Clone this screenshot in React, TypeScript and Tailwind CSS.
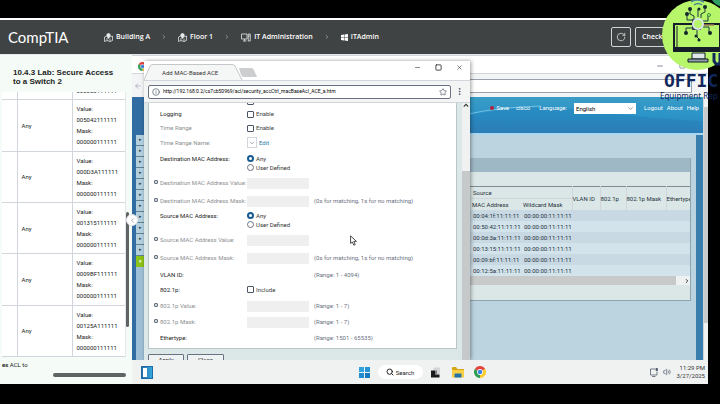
import type { ReactNode } from "react";
import { ArrowLeft, ChevronDown, ChevronLeft, ChevronRight, Info, Minus, MoreVertical, RotateCw, Search, Square, Star, Volume2, X } from "lucide-react";

const aclRows = ["005042111111", "000D3A111111", "001315111111", "0009BF111111", "00125A111111"];
const macRows = ["00:04:1f:11:11:11", "00:50:42:11:11:11", "00:0d:3a:11:11:11", "00:13:15:11:11:11", "00:09:bf:11:11:11", "00:12:5a:11:11:11"];

function ChromeLogo({ className }: { className?: string }) {
  return (
    <svg viewBox="0 0 24 24" className={className} aria-hidden="true">
      <path d="M12 12 L1.6 6 A12 12 0 0 1 22.4 6 Z" fill="#e0443a" />
      <path d="M12 12 L22.4 6 A12 12 0 0 1 12 24 Z" fill="#f9cb2e" />
      <path d="M12 12 L12 24 A12 12 0 0 1 1.6 6 Z" fill="#2f9e52" />
      <circle cx="12" cy="12" r="5.8" fill="#fff" />
      <circle cx="12" cy="12" r="4.5" fill="#3f83e8" />
    </svg>
  );
}

function MapPinIcon() {
  return (
    <svg viewBox="0 0 18 18" className="h-[9px] w-[9px]" fill="none" stroke="#e8eaea" strokeWidth="1.5" aria-hidden="true">
      <path d="M5.500 6 L1 8 V17 L6 15 L12 17 L17 15 V6 L12.500 7.500 M6 10 V15 M12 11 V17" />
      <path d="M9 11 C6 7.500 5.500 6 5.500 4.500 A3.500 3.500 0 0 1 12.500 4.500 C12.500 6 12 7.500 9 11 Z" fill="#e8eaea" />
    </svg>
  );
}

function ComputerIcon() {
  return (
    <svg viewBox="0 0 20 18" className="h-[9px] w-[10px]" fill="none" stroke="#e8eaea" strokeWidth="1.6" aria-hidden="true">
      <path d="M1 2 H12 V12 H1 Z M4 16 H11 M7 12 V16" />
      <path d="M14.500 2 H18.500 V16 H14.500 Z M14.500 6 H18.500" />
    </svg>
  );
}

function WindowsIcon({ className }: { className?: string }) {
  return (
    <svg viewBox="0 0 14 14" className={className} fill="currentColor" aria-hidden="true">
      <path d="M0 2 L6 1 V6.500 H0 Z M7 .9 L14 0 V6.500 H7 Z M0 7.500 H6 V13 L0 12 Z M7 7.500 H14 V14 L7 13.100 Z" />
    </svg>
  );
}

function Crumb({ icon, children }: { icon: ReactNode; children: ReactNode }) {
  return (
    <a href="#" className="flex items-center gap-[3px] text-[7px] font-semibold text-white">
      {icon}
      {children}
    </a>
  );
}

function TopBar() {
  return (
    <header className="flex h-9 shrink-0 items-center border-t-2 border-white bg-[#3f4344] pl-2 font-['Open_Sans',sans-serif]">
      <span className="w-24 font-['Lato',sans-serif] text-[15px] leading-4 text-white">CompTIA</span>
      <nav className="flex items-center gap-[11px]">
        <Crumb icon={<MapPinIcon />}>Building A</Crumb>
        <ChevronRight className="h-[6px] w-[6px] text-gray-300" />
        <Crumb icon={<MapPinIcon />}>Floor 1</Crumb>
        <ChevronRight className="h-[6px] w-[6px] text-gray-300" />
        <Crumb icon={<ComputerIcon />}>IT Administration</Crumb>
        <ChevronRight className="h-[6px] w-[6px] text-gray-300" />
        <Crumb icon={<WindowsIcon className="h-[7px] w-[7px]" />}>ITAdmin</Crumb>
      </nav>
      <div className="ml-auto flex gap-1">
        <button aria-label="Reload" className="flex h-5 w-5 items-center justify-center rounded-xs border border-gray-300">
          <RotateCw className="h-[10px] w-[10px] text-white" strokeWidth={1.5} />
        </button>
        <button className="h-5 w-[73px] rounded-xs border border-gray-300 pl-[6px] text-left text-[7px] font-semibold text-white">Check</button>
      </div>
    </header>
  );
}

function LabPanel() {
  return (
    <aside className="relative flex min-h-0 w-[132px] shrink-0 flex-col bg-[#f5fcf7] text-[#222]">
      <h1 className="h-[37px] shrink-0 pt-[13px] pl-[13px] font-['Liberation_Sans',sans-serif] text-[8px] leading-[9px] font-bold">
        10.4.3 Lab: Secure Access
        <br />
        to a Switch 2
      </h1>
      <div className="flex min-h-0 flex-1 pl-[2px]">
        <div className="flex w-[124px] flex-col justify-end overflow-hidden">
          <table className="h-[308px] w-full shrink-0 table-fixed border-collapse bg-white text-[6px] leading-[11px]">
            <colgroup>
              <col className="w-[15px]" />
              <col className="w-[55px]" />
              <col />
            </colgroup>
            <tbody className="[&_td]:p-0">
              {["000000111111", ...aclRows].map((mac) => (
                <tr key={mac} className="border-b border-gray-300">
                  <td className="border-r border-gray-300" />
                  <td className="border-r border-gray-300"><span className="pl-1">Any</span></td>
                  <td className="border-r border-gray-200">
                    <div className="pl-1">
                      <p>Value:</p>
                      <p>{mac}</p>
                      <p>Mask:</p>
                      <p>000000111111</p>
                    </div>
                  </td>
                </tr>
              ))}
            </tbody>
          </table>
          <p className="h-[14px] shrink-0 pt-[2px] text-[6px] leading-[11px]">
            <b>es</b> ACL to
          </p>
          <div className="flex h-[13px] shrink-0 items-start justify-end pt-[2px]">
            <div className="h-1 w-[73px] rounded-full bg-[#606366]" />
          </div>
        </div>
        <div className="w-[3px] pt-[120px]">
          <div className="h-[115px] rounded-full bg-[#606366]" />
        </div>
      </div>
      <button aria-label="Collapse panel" className="absolute top-[159px] -right-[6px] z-20 flex h-3 w-3 items-center justify-center rounded-full border border-gray-200 bg-white">
        <ChevronLeft className="h-[7px] w-[7px] text-gray-500" />
      </button>
    </aside>
  );
}

function BannerMenu() {
  return (
    <div className="relative flex h-[38px] shrink-0 items-start justify-end border-b-2 border-[#a9d6f1] bg-linear-to-b from-[#3a9cc6] via-[#2b94c8] to-[#3380b6] pt-[6px] text-[6px] leading-[9px] text-white">
      <svg viewBox="0 0 230 36" preserveAspectRatio="none" className="absolute inset-0 h-full w-full" aria-hidden="true">
        <path d="M0 18 Q60 6 120 14 T230 24 V36 H0 Z" fill="#1f78b4" opacity=".35" />
        <path d="M0 17 Q30 10 70 9" fill="none" stroke="#9fdcf2" opacity=".6" />
      </svg>
      <div className="relative flex items-start">
        <a href="#" className="flex items-center gap-[2px]">
          <span className="h-[4px] w-[4px] rounded-full bg-[#b3213c]" />
          Save
        </a>
        <span className="ml-[7px]">cisco</span>
        <label htmlFor="lang" className="ml-[9px]">Language:</label>
        <div className="relative mr-2 ml-[7px]">
          <select id="lang" className="block h-[11px] w-[62px] appearance-none bg-white pl-[2px] text-[6px] leading-[9px] text-black">
            <option>English</option>
          </select>
          <ChevronDown className="absolute top-[2px] right-[2px] h-[7px] w-[7px] text-gray-600" />
        </div>
        <nav className="flex gap-1 pr-[4px]">
          <a href="#">Logout</a>
          <a href="#">About</a>
          <a href="#">Help</a>
        </nav>
      </div>
    </div>
  );
}

function MacTable() {
  return (
    <div className="mr-[5px] overflow-hidden border-r border-b border-[#8ba6b1] bg-[#dbe7e6]">
      <div className="h-[14px] bg-[#9fb8c6]" />
      <div className="h-[14px]" />
      <table className="w-full table-fixed border-collapse border-t border-[#7c8d94] text-[6px] leading-[11px] whitespace-nowrap text-[#24303a]">
        <colgroup>
          <col className="w-[51px]" />
          <col className="w-[52px]" />
          <col className="w-[28px]" />
          <col className="w-[26px]" />
          <col className="w-[40px]" />
          <col />
        </colgroup>
        <thead className="text-left [&_th]:p-0 [&_th]:font-normal">
          <tr>
            <th colSpan={2} className="border-b border-gray-300"><span className="pl-[4px]">Source</span></th>
            <th rowSpan={2} className="border-l border-gray-300">VLAN ID</th>
            <th rowSpan={2} className="border-l border-gray-300">802.1p</th>
            <th rowSpan={2} className="border-l border-gray-300">802.1p Mask</th>
            <th rowSpan={2} className="border-l border-gray-300">Ethertype</th>
          </tr>
          <tr>
            <th><span className="pl-[3px]">MAC Address</span></th>
            <th><span className="pl-[3px]">Wildcard Mask</span></th>
          </tr>
        </thead>
        <tbody className="[&_td]:p-0">
          {macRows.map((mac) => (
            <tr key={mac} className="odd:bg-[#c9d9e4] even:bg-[#d3e3ec]">
              <td><span className="pl-[4px]">{mac}</span></td>
              <td><span className="pl-[4px]">00:00:00:11:11:11</span></td>
              <td colSpan={4} />
            </tr>
          ))}
        </tbody>
      </table>
      <div className="flex h-[9px] items-center justify-end bg-[#c8c9c9]">
        <div className="flex h-[9px] w-[14px] items-center justify-end bg-[#eef1f1]">
          <ChevronRight className="h-[6px] w-[6px] text-black" strokeWidth={3} />
        </div>
      </div>
      <div className="h-[15px]" />
    </div>
  );
}

function SwitchWindow() {
  return (
    <section className="absolute inset-0 flex flex-col bg-[#f3f4f5]">
      <div className="flex h-[18px] shrink-0 items-start justify-between border-t border-gray-300 bg-white pt-[6px] pl-[6px]">
        <ChromeLogo className="h-[9px] w-[9px]" />
        <div className="flex gap-[15px] pr-[22px] text-gray-600">
          <Minus className="h-[8px] w-[8px]" />
          <Square className="h-[7px] w-[7px]" />
        </div>
      </div>
      <div className="flex h-[24px] shrink-0 items-center gap-4 border-t border-gray-300 pl-[2px]">
        <ArrowLeft className="h-[8px] w-[8px] text-gray-400" />
        <div className="mr-4 h-[14px] flex-1 border border-gray-400 bg-white" />
      </div>
      <div className="flex min-h-0 flex-1 bg-[#3a7eae]">
        <div className="flex w-3 shrink-0 flex-col items-end bg-[#316da3] pt-[38px]">
          {Array.from({ length: 11 }, (_, i) => (
            <div key={i} className="flex h-[11px] w-[8px] shrink-0 items-center justify-center border-b border-[#5f8295] bg-[#b4d0df] text-[5px] text-[#2c4350]">
              ▸
            </div>
          ))}
          <div className="flex h-[11px] w-[8px] shrink-0 items-center justify-center bg-[#8cc31b] text-[5px] text-white">▾</div>
          <div className="w-[8px] flex-1 bg-[#9fbfd6]" />
        </div>
        <div className="ml-[325px] flex min-w-0 flex-1 flex-col">
          <BannerMenu />
          <div className="flex-1 border-r-[7px] border-[#3a7eae] bg-[#bcd4df] pt-[23px]">
            <MacTable />
          </div>
        </div>
        <div className="w-[5px] shrink-0 border-l border-gray-300 bg-[#f0f1f1]">
          <div className="mt-[10px] h-[216px] bg-[#c9cbcc]" />
        </div>
      </div>
    </section>
  );
}

type RowProps = { label: string; height: string; muted?: boolean; marker?: boolean; hint?: string; children?: ReactNode };

function FormRow({ label, height, muted, marker, hint, children }: RowProps) {
  return (
    <div className={`grid shrink-0 grid-cols-[5px_81px_66px_1fr] items-center gap-x-[1px] pl-[5px] ${height}`}>
      <span className={marker ? "mb-[3px] h-[4px] w-[4px] rounded-[1px] border border-gray-500 bg-gray-300" : ""} />
      <span className={`whitespace-nowrap ${muted ? "text-[#8c8f92]" : "text-[#222]"}`}>{label}</span>
      <span className="flex items-center gap-[2px] pl-[5px] whitespace-nowrap">{children}</span>
      <span className="pl-[5px] whitespace-nowrap text-gray-500">{hint}</span>
    </div>
  );
}

function Check({ label }: { label: string }) {
  return (
    <label className="flex items-center gap-[2px] text-[#444]">
      <input type="checkbox" className="h-[7px] w-[7px] appearance-none rounded-[1px] border border-gray-600 bg-white" />
      {label}
    </label>
  );
}

function Field({ label }: { label: string }) {
  return <input type="text" disabled aria-label={label} className="h-[11px] w-[62px] bg-[#efefef]" />;
}

function AddressGroup({ name }: { name: string }) {
  return (
    <div className="mb-[1px] flex shrink-0 flex-col">
      <div className="mb-[2px] grid h-[18px] grid-cols-[5px_81px_1fr] gap-x-[1px] pl-[5px] leading-[9px]">
        <span />
        <span className="whitespace-nowrap text-[#222]">{name}:</span>
        <fieldset className="flex flex-col pl-[5px]">
          {["Any", "User Defined"].map((option, i) => (
            <label key={option} className="flex h-[9px] items-center gap-[2px] text-[#333]">
              <input
                type="radio"
                name={name}
                defaultChecked={i === 0}
                className="h-[7px] w-[7px] appearance-none rounded-full border border-gray-500 bg-white checked:border-2 checked:border-[#175b92]"
              />
              {option}
            </label>
          ))}
        </fieldset>
      </div>
      <FormRow label={`${name} Value:`} height="h-[18px]" muted marker>
        <Field label={`${name} Value`} />
      </FormRow>
      <FormRow label={`${name} Mask:`} height="h-[18px]" muted marker hint="(0s for matching, 1s for no matching)">
        <Field label={`${name} Mask`} />
      </FormRow>
    </div>
  );
}

function AceForm() {
  return (
    <div className="flex h-[246px] shrink-0 flex-col overflow-hidden border border-t-0 border-[#b9c6c6] bg-white text-[6px] leading-[10px]">
      <div className="-mt-[10px] h-[14px] shrink-0 pt-[5px] pl-[98px]">
        <input type="checkbox" aria-label="Option" className="block h-[7px] w-[7px] appearance-none rounded-[1px] border border-gray-600" />
      </div>
      <FormRow label="Logging" height="h-[14px]"><Check label="Enable" /></FormRow>
      <FormRow label="Time Range" height="h-[14px]" muted><Check label="Enable" /></FormRow>
      <FormRow label="Time Range Name:" height="h-[15px] mb-[4px]" muted>
        <span className="relative">
          <select aria-label="Time Range Name" className="block h-[11px] w-[10px] appearance-none border border-gray-300 bg-white" />
          <ChevronDown className="absolute top-[3px] left-[2px] h-[6px] w-[6px] text-gray-600" />
        </span>
        <a href="#" className="text-[#2f7ba3]">Edit</a>
      </FormRow>
      <AddressGroup name="Destination MAC Address" />
      <AddressGroup name="Source MAC Address" />
      <FormRow label="VLAN ID:" height="h-[13px]" hint="(Range: 1 - 4094)" />
      <FormRow label="802.1p:" height="h-[17px]"><Check label="Include" /></FormRow>
      <FormRow label="802.1p Value:" height="h-4" muted marker hint="(Range: 1 - 7)"><Field label="802.1p Value" /></FormRow>
      <FormRow label="802.1p Mask:" height="h-4" muted marker hint="(Range: 1 - 7)"><Field label="802.1p Mask" /></FormRow>
      <FormRow label="Ethertype:" height="h-4" hint="(Range: 1501 - 65535)" />
    </div>
  );
}

function AceWindow() {
  return (
    <section className="absolute top-[6px] bottom-0 left-3 z-10 flex w-[326px] flex-col bg-white shadow-[1px_0_4px_rgba(0,0,0,0.4)]">
      <div className="flex h-[20px] shrink-0 items-end border-b border-gray-300">
        <div className="relative flex h-[16px] w-[100px] items-center pl-[18px] text-[6px] text-[#333]">
          <svg viewBox="0 0 100 16" preserveAspectRatio="none" className="absolute inset-0 h-full w-full" aria-hidden="true">
            <path d="M0 16 L6 2 Q7 .5 9 .5 H88 Q90 .5 91 2 L98 16" fill="#f5f6f6" stroke="#c4c6c8" />
          </svg>
          <span className="relative">Add MAC-Based ACE</span>
        </div>
        <svg viewBox="0 0 18 9" className="-ml-[5px] mb-[3px] h-[9px] w-[18px]" aria-hidden="true">
          <path d="M0 0 H12 Q14 0 15 2 L18 9 H5 Q3 9 2 7 Z" fill="#ccced0" />
        </svg>
        <div className="ml-auto flex gap-[14px] self-start pt-[3px] pr-[7px] text-[#333]">
          <button aria-label="Minimize"><Minus className="h-[7px] w-[7px]" /></button>
          <button aria-label="Maximize"><Square className="h-[7px] w-[7px]" strokeWidth={3} /></button>
          <button aria-label="Close"><X className="h-[7px] w-[7px]" /></button>
        </div>
      </div>
      <div className="flex h-[22px] shrink-0 items-center gap-[4px] border-b border-gray-300 bg-[#f3f4f4] pr-[6px] pl-[4px]">
        <div className="flex h-[14px] flex-1 items-center rounded-xs border border-gray-500 bg-white px-[3px]">
          <Info className="h-[8px] w-[8px] text-gray-600" />
          <input aria-label="Address" defaultValue="http://192.168.0.2/cs7cb50969/acl/security_accCtrl_macBaseAcl_ACE_a.htm" className="ml-[3px] flex-1 text-[5px] text-black" />
          <Star className="h-[8px] w-[8px] text-gray-600" />
        </div>
        <MoreVertical className="h-[9px] w-[9px] text-gray-700" />
      </div>
      <div className="flex min-h-0 flex-1 bg-[#dce8e8]">
        <div className="flex min-w-0 flex-1 flex-col overflow-hidden pr-[5px] pl-[4px]">
          <AceForm />
          <div className="mt-[5px] flex shrink-0 gap-[3px] text-[6px] leading-[10px] text-[#222]">
            <button className="h-3 w-[36px] rounded-[1px] border border-gray-500 bg-[#eef2f2]">Apply</button>
            <button className="h-3 w-[37px] rounded-[1px] border border-gray-500 bg-[#eef2f2]">Close</button>
          </div>
        </div>
        <div className="flex w-[8px] shrink-0 flex-col items-center bg-[#f0f2f2]">
          <svg viewBox="0 0 8 5" className="h-[5px] w-[6px]" aria-hidden="true"><path d="M1 4 L4 1 L7 4" fill="none" stroke="#333" strokeWidth="1.500" /></svg>
          <div className="mt-[63px] w-full flex-1 bg-[#c6c9ca]" />
        </div>
      </div>
      <svg viewBox="0 0 12 18" className="absolute top-[174px] left-[206px] h-[11px] w-[7px]" aria-hidden="true">
        <path d="M1 1 V14 L4 11.500 L6.500 17 L9 16 L6.500 10.500 H11 Z" fill="#fff" stroke="#333" strokeWidth="1.500" />
      </svg>
    </section>
  );
}

function Taskbar() {
  return (
    <footer className="grid h-6 shrink-0 grid-cols-[1fr_auto_1fr] items-center bg-[#f0f2f2] text-[#222]">
      <button aria-label="Widgets" className="ml-[9px] flex h-[13px] w-[12px] border border-[#1d6ba7] bg-linear-to-r from-[#2a6fa3] to-[#35a7e0] p-[1px]">
        <span className="h-full w-[4px] bg-white" />
      </button>
      <div className="flex items-center gap-[8px] pl-[4px]">
        <button aria-label="Start" className="grid h-[11px] w-[11px] grid-cols-2 gap-[1px]">
          <span className="h-[5px] bg-[#2ea3de]" />
          <span className="h-[5px] bg-[#2594d6]" />
          <span className="h-[5px] bg-[#1f8acf]" />
          <span className="h-[5px] bg-[#1579c0]" />
        </button>
        <button className="flex h-[14px] w-[45px] items-center justify-center gap-[2px] rounded-full bg-white text-[6px]">
          <Search className="h-[8px] w-[8px]" strokeWidth={3} />
          Search
        </button>
        <svg viewBox="0 0 18 20" className="h-[11px] w-[9px]" aria-hidden="true">
          <path d="M5 0 H18 V14 H5 Z" fill="#d5d5d6" />
          <path d="M0 6 H8 V14 H17 V20 H0 Z" fill="#18191b" />
          <path d="M8 6 H12 V14 H8 Z" fill="#7b7c7e" />
        </svg>
        <svg viewBox="0 0 24 22" className="ml-[4px] h-[11px] w-3" aria-hidden="true">
          <path d="M0 2 Q0 0 2 0 H8 L11 4 H24 V20 H0 Z" fill="#d9a514" />
          <path d="M0 6 H24 V21 H0 Z" fill="#f8cf45" />
          <path d="M5 21 V15 Q5 13 7 13 H17 Q19 13 19 15 V21 Z" fill="#2472a8" />
        </svg>
        <ChromeLogo className="ml-[2px] h-3 w-3" />
      </div>
      <div className="flex items-center justify-end gap-[5px] pr-[3px] text-gray-600">
        <svg viewBox="0 0 16 18" className="h-[9px] w-[8px]" fill="none" stroke="currentColor" strokeWidth="1.500" aria-hidden="true">
          <path d="M11 2 H1 V14 H14 V7 M4 17 H11" />
          <path d="M12 1 H15 V5 H12 Z" fill="currentColor" />
        </svg>
        <Volume2 className="h-[8px] w-[8px]" />
        <div className="text-right text-[6px] leading-[8px] text-[#333]">
          <p>11:29 PM</p>
          <p>3/27/2025</p>
        </div>
      </div>
    </footer>
  );
}

function OfficeBadge() {
  return (
    <div className="absolute top-0 right-0 z-30 w-[60px] text-[#12285c]">
      <svg viewBox="0 0 60 72" className="h-[72px] w-[60px] overflow-visible" aria-hidden="true">
        <circle cx="37" cy="35" r="35" fill="#b7f56b" />
        <path d="M52 0 H60 V6 Q55 5 52 0 Z" fill="#2f9e62" />
        <path d="M31 2 Q37 -2 44 2 M34 5 Q38 2 42 5" fill="none" stroke="#4b8797" strokeWidth="1.500" />
        <path d="M14 24 H60 V51 H14 Z" fill="#b7f56b" stroke="#151d2a" strokeWidth="2" />
        <path d="M14 49 H60" stroke="#151d2a" strokeWidth="4" />
        <path d="M17 26 V47" stroke="#151d2a" strokeWidth="1" />
        <path d="M32 53 H45 V59 H32 Z" fill="#dfe6e8" stroke="#151d2a" />
        <path d="M28 59 H48 V62 H28 Z" fill="#8fa0a8" stroke="#151d2a" />
        <g stroke="#1e3a3f" strokeWidth="1" fill="none">
          <path d="M34 20 V16 L30 14 V9 M27 14 V20 H33 M38 17 V9 M41 18 V14 L45 12 V8 M43 21 H48 V15" />
          <path d="M33 28 H26 V33 M37 30 V37 L40 40 M43 27 H49 V33" />
        </g>
        <g fill="#13262c">
          <circle cx="30" cy="9" r="2" />
          <circle cx="27" cy="14" r="2" />
          <circle cx="45" cy="7" r="2" />
          <circle cx="39" cy="9" r="1.500" />
          <circle cx="26" cy="33" r="2" />
          <circle cx="50" cy="33" r="2" />
          <circle cx="36" cy="36" r="1.500" />
          <circle cx="39" cy="40" r="1.500" />
        </g>
        <circle cx="49" cy="15" r="1.500" fill="#b7f56b" stroke="#2f8f3f" />
        <path d="M32 19 H41 V30 H32 Z" fill="#33454d" />
        <path d="M42 25 H54" stroke="#a27c55" strokeWidth="1.500" />
        <circle cx="38" cy="24" r="5" fill="#b7f56b" stroke="#d9e4e8" strokeWidth="2" />
        <path d="M54 53 V61 L56 64 H60 V53" fill="none" stroke="#12285c" strokeWidth="3" />
      </svg>
      <div className="w-[60px] overflow-hidden whitespace-nowrap">
        <p className="pl-[4px] font-['DejaVu_Sans_Mono',monospace] text-[18px] leading-[18px] font-bold">OFFIC</p>
      </div>
      <p className="overflow-hidden font-['Noto_Sans',sans-serif] text-[8px] leading-[12px] whitespace-nowrap">Equipment Rep</p>
    </div>
  );
}

export default function App() {
  return (
    <div className="relative flex h-screen flex-col overflow-hidden bg-black pt-[18px] pr-3 pb-5 font-['Roboto',sans-serif]">
      <TopBar />
      <main className="flex min-h-0 flex-1 border-t border-gray-200 bg-[#f5fcf7]">
        <LabPanel />
        <div className="flex min-w-0 flex-1 flex-col">
          <div className="relative min-h-0 flex-1 overflow-hidden">
            <SwitchWindow />
            <AceWindow />
          </div>
          <Taskbar />
        </div>
      </main>
      <OfficeBadge />
    </div>
  );
}
